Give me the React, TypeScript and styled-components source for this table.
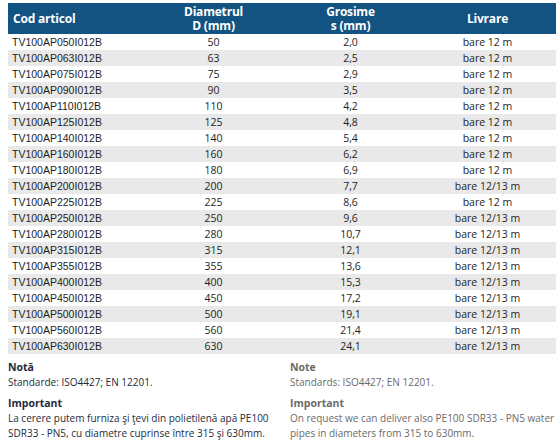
import styled, { createGlobalStyle } from "styled-components";

const GlobalStyle = createGlobalStyle`
  body {
    margin: 0;
    background: #ffffff;
    font-family: "Open Sans", "Noto Sans", sans-serif;
  }
`;

const Page = styled.div`
  padding: 3px 4px 0 8px;
`;

const Table = styled.table`
  width: 548px;
  border-collapse: collapse;
  table-layout: fixed;
`;

const HeadCell = styled.th<{ align?: string }>`
  background: #135381;
  color: #ffffff;
  font-family: "Open Sans", sans-serif;
  font-weight: 700;
  font-size: 12px;
  line-height: 14px;
  letter-spacing: -0.2px;
  height: 31px;
  padding: 0 5px;
  text-align: ${(p) => p.align || "center"};
  vertical-align: middle;
`;

const Row = styled.tr<{ striped: boolean }>`
  background: ${(p) => (p.striped ? "#e9e9e9" : "#ffffff")};
  height: 16px;
`;

const CodeCell = styled.td`
  font-family: "Liberation Sans", Arial, sans-serif;
  font-size: 10.5px;
  color: #1e1e1e;
  padding: 0 4px;
  line-height: 16px;
`;

const ValueCell = styled.td`
  font-family: "Open Sans", sans-serif;
  font-size: 10.5px;
  color: #1e1e1e;
  text-align: center;
  line-height: 16px;
  padding: 0;
`;

const Notes = styled.div`
  display: grid;
  grid-template-columns: 282px 1fr;
  margin-top: 6px;
`;

const NoteCol = styled.div<{ muted?: boolean }>`
  color: ${(p) => (p.muted ? "#6a6a6a" : "#1d2b3c")};
  font-family: "Open Sans", sans-serif;
  font-size: 10px;
  line-height: 15px;
  white-space: nowrap;
`;

const NoteTitle = styled.div`
  font-weight: 700;
  font-size: 10.5px;
`;

const NoteText = styled.div`
  margin-bottom: 6px;
`;

const rows: [string, string, string, string][] = [
  ["TV100AP050I012B", "50", "2,0", "bare 12 m"],
  ["TV100AP063I012B", "63", "2,5", "bare 12 m"],
  ["TV100AP075I012B", "75", "2,9", "bare 12 m"],
  ["TV100AP090I012B", "90", "3,5", "bare 12 m"],
  ["TV100AP110I012B", "110", "4,2", "bare 12 m"],
  ["TV100AP125I012B", "125", "4,8", "bare 12 m"],
  ["TV100AP140I012B", "140", "5,4", "bare 12 m"],
  ["TV100AP160I012B", "160", "6,2", "bare 12 m"],
  ["TV100AP180I012B", "180", "6,9", "bare 12 m"],
  ["TV100AP200I012B", "200", "7,7", "bare 12/13 m"],
  ["TV100AP225I012B", "225", "8,6", "bare 12 m"],
  ["TV100AP250I012B", "250", "9,6", "bare 12/13 m"],
  ["TV100AP280I012B", "280", "10,7", "bare 12/13 m"],
  ["TV100AP315I012B", "315", "12,1", "bare 12/13 m"],
  ["TV100AP355I012B", "355", "13,6", "bare 12/13 m"],
  ["TV100AP400I012B", "400", "15,3", "bare 12/13 m"],
  ["TV100AP450I012B", "450", "17,2", "bare 12/13 m"],
  ["TV100AP500I012B", "500", "19,1", "bare 12/13 m"],
  ["TV100AP560I012B", "560", "21,4", "bare 12/13 m"],
  ["TV100AP630I012B", "630", "24,1", "bare 12/13 m"],
];

export default function App() {
  return (
    <Page>
      <GlobalStyle />
      <Table>
        <thead>
          <tr>
            <HeadCell align="left">Cod articol</HeadCell>
            <HeadCell>
              Diametrul
              <br />D (mm)
            </HeadCell>
            <HeadCell>
              Grosime
              <br />s (mm)
            </HeadCell>
            <HeadCell>Livrare</HeadCell>
          </tr>
        </thead>
        <tbody>
          {rows.map((r, i) => (
            <Row key={r[0]} striped={i % 2 === 1}>
              <CodeCell>{r[0]}</CodeCell>
              <ValueCell>{r[1]}</ValueCell>
              <ValueCell>{r[2]}</ValueCell>
              <ValueCell>{r[3]}</ValueCell>
            </Row>
          ))}
        </tbody>
      </Table>
      <Notes>
        <NoteCol>
          <NoteTitle>Notă</NoteTitle>
          <NoteText>Standarde: ISO4427; EN 12201.</NoteText>
          <NoteTitle>Important</NoteTitle>
          <NoteText>
            La cerere putem furniza şi ţevi din polietilenă apă PE100
            <br />
            SDR33 - PN5, cu diametre cuprinse între 315 şi 630mm.
          </NoteText>
        </NoteCol>
        <NoteCol muted>
          <NoteTitle>Note</NoteTitle>
          <NoteText>Standards: ISO4427; EN 12201.</NoteText>
          <NoteTitle>Important</NoteTitle>
          <NoteText>
            On request we can deliver also PE100 SDR33 - PN5 water
            <br />
            pipes in diameters from 315 to 630mm.
          </NoteText>
        </NoteCol>
      </Notes>
    </Page>
  );
}
